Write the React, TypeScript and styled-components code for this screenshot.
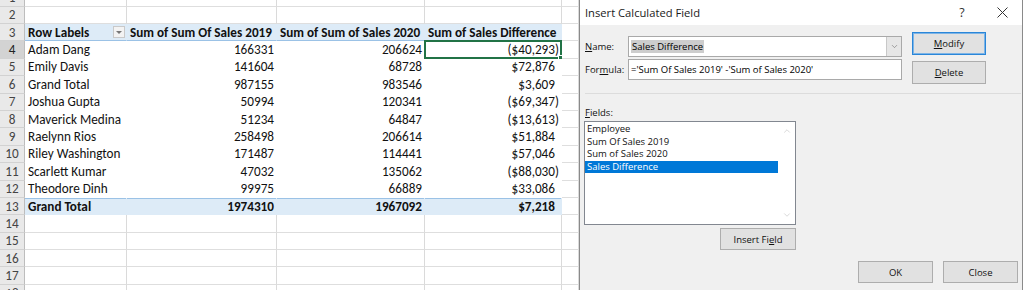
import React from 'react';
import styled, { createGlobalStyle } from 'styled-components';
import { ChevronDown, ChevronUp } from 'lucide-react';

const GlobalStyle = createGlobalStyle`
  html, body { margin: 0; padding: 0; background: #fff; overflow: hidden; }
  * { box-sizing: border-box; }
`;

const Page = styled.div`
  display: flex;
  width: 1024px;
  height: 290px;
  overflow: hidden;
  background: #fff;
`;

/* ---------- spreadsheet ---------- */

const Sheet = styled.div`
  display: grid;
  grid-template-columns: 25px 102px 150px 148px 137px 17px;
  grid-auto-rows: 17.4px;
  width: 579px;
  flex: none;
  margin-top: -10.8px;
  align-self: flex-start;
  font-family: Carlito, Calibri, Lato, sans-serif;
  font-size: 13.2px;
  color: #111;
`;

const RowHead = styled.div<{ $active?: boolean }>`
  display: flex;
  align-items: center;
  justify-content: center;
  background: ${(p) => (p.$active ? '#d3d3d3' : '#e9e9e9')};
  color: ${(p) => (p.$active ? '#222' : '#444')};
  border-right: 1px solid #bdbdbd;
  border-bottom: 1px solid #d2d2d2;
`;

type Band = 'grid' | 'plain' | 'head' | 'total';

const Cell = styled.div<{ $band: Band; $right?: boolean; $bold?: boolean; $padR?: number }>`
  position: relative;
  display: flex;
  align-items: center;
  justify-content: ${(p) => (p.$right ? 'flex-end' : 'flex-start')};
  padding: 0 ${(p) => p.$padR ?? 2}px 0 3px;
  white-space: nowrap;
  font-weight: ${(p) => (p.$bold ? 700 : 400)};
  background: ${(p) => (p.$band === 'head' || p.$band === 'total' ? '#ddebf7' : '#fff')};
  border-right: 1px solid ${(p) => (p.$band === 'grid' ? '#dadada' : 'transparent')};
  border-bottom: 1px solid
    ${(p) => (p.$band === 'grid' ? '#dedede' : p.$band === 'head' ? '#9bc2e6' : 'transparent')};
  box-shadow: ${(p) => (p.$band === 'total' ? 'inset 0 1px 0 #9bc2e6' : 'none')};
`;

const FilterButton = styled.span`
  margin-left: auto;
  width: 12px;
  height: 12px;
  display: flex;
  align-items: center;
  justify-content: center;
  background: #f3f3f3;
  border: 1px solid #c9c9c9;
  &::after {
    content: '';
    border-left: 3px solid transparent;
    border-right: 3px solid transparent;
    border-top: 3px solid #777;
  }
`;

const Selection = styled.span`
  position: absolute;
  inset: -1px -1px -1px -1px;
  border: 2px solid #217346;
  pointer-events: none;
`;

const FillHandle = styled.span`
  position: absolute;
  right: -4px;
  bottom: -4px;
  width: 6px;
  height: 6px;
  background: #217346;
  border: 1px solid #fff;
`;

/* ---------- dialog ---------- */

const Dialog = styled.div`
  width: 444px;
  flex: none;
  display: flex;
  flex-direction: column;
  background: #f0f0f0;
  border-left: 1px solid #8a8a8a;
  border-right: 1px solid #8a8a8a;
  font-family: 'Segoe UI', 'Open Sans', sans-serif;
  font-size: 9.5px;
  color: #000;
`;

const TitleBar = styled.div`
  height: 25px;
  display: flex;
  align-items: center;
  background: #fff;
  padding-left: 5px;
`;

const Title = styled.span`
  flex: 1;
  font-size: 11.2px;
  color: #1a1a1a;
`;

const TitleButton = styled.span`
  width: 40px;
  height: 25px;
  display: flex;
  align-items: center;
  justify-content: center;
  font-size: 12.5px;
  color: #333;
`;

const Body = styled.div`
  flex: 1;
  display: flex;
  flex-direction: column;
  padding: 7px 0 0 4px;
`;

const TopSection = styled.div`
  display: flex;
  align-items: flex-start;
`;

const FormGrid = styled.div`
  display: grid;
  grid-template-columns: 44px 274px;
  grid-auto-rows: 21px;
  row-gap: 2px;
  margin-top: 4px;
`;

const Label = styled.label`
  display: flex;
  align-items: center;
  padding-left: 1px;
  color: #111;
`;

const Field = styled.div`
  display: flex;
  align-items: center;
  background: #fff;
  border: 1px solid #a9a9a9;
  padding-left: 2px;
  white-space: nowrap;
`;

const Highlight = styled.span`
  background: #cdcdcd;
  padding: 0 1px;
  line-height: 12px;
`;

const ComboText = styled.span`
  flex: 1;
`;

const DropButton = styled.span`
  align-self: stretch;
  width: 15px;
  display: flex;
  align-items: center;
  justify-content: center;
  background: #e6e6e6;
  border-left: 1px solid #c8c8c8;
  color: #666;
`;

const ButtonColumn = styled.div`
  display: flex;
  flex-direction: column;
  gap: 6px;
  margin-left: 10px;
`;

const Button = styled.button<{ $primary?: boolean; $w?: number }>`
  width: ${(p) => p.$w ?? 75}px;
  height: ${(p) => (p.$primary !== undefined ? 23 : 22)}px;
  padding: 0;
  font: inherit;
  color: #111;
  background: #e1e1e1;
  border: 1px solid ${(p) => (p.$primary ? '#2a86d8' : '#adadad')};
  box-shadow: ${(p) => (p.$primary ? 'inset 0 0 0 1px #7db4e6' : 'none')};
`;

const Mn = styled.span`
  text-decoration: underline;
`;

const Separator = styled.div`
  height: 1px;
  background: #dcdcdc;
  margin: 9px 1px 0 1px;
`;

const FieldsLabel = styled(Label)`
  height: 13px;
  margin-top: 12px;
`;

const ListBox = styled.div`
  width: 212px;
  height: 104px;
  margin-top: 2px;
  display: flex;
  background: #fff;
  border: 1px solid #828790;
`;

const ListItems = styled.div`
  flex: 1;
  padding-top: 1px;
`;

const ListItem = styled.div<{ $selected?: boolean }>`
  height: 12.6px;
  line-height: 12.6px;
  padding-left: 2px;
  background: ${(p) => (p.$selected ? '#0078d7' : 'transparent')};
  color: ${(p) => (p.$selected ? '#fff' : '#111')};
`;

const ScrollBar = styled.div`
  width: 17px;
  display: flex;
  flex-direction: column;
  justify-content: space-between;
  align-items: center;
  padding: 4px 0 4px;
  color: #c2c2c2;
`;

const InsertRow = styled.div`
  width: 212px;
  display: flex;
  justify-content: flex-end;
  margin-top: 3px;
`;

const Footer = styled.div`
  display: flex;
  justify-content: flex-end;
  gap: 10px;
  margin-top: 11px;
  padding-right: 4px;
`;

/* ---------- data ---------- */

type RowData = {
  n: number;
  kind: 'blank' | 'head' | 'data' | 'total';
  label?: string;
  b?: string;
  c?: string;
  d?: string;
};

const rows: RowData[] = [
  { n: 1, kind: 'blank' },
  { n: 2, kind: 'blank' },
  { n: 3, kind: 'head' },
  { n: 4, kind: 'data', label: 'Adam Dang', b: '166331', c: '206624', d: '($40,293)' },
  { n: 5, kind: 'data', label: 'Emily Davis', b: '141604', c: '68728', d: '$72,876' },
  { n: 6, kind: 'data', label: 'Grand Total', b: '987155', c: '983546', d: '$3,609' },
  { n: 7, kind: 'data', label: 'Joshua Gupta', b: '50994', c: '120341', d: '($69,347)' },
  { n: 8, kind: 'data', label: 'Maverick Medina', b: '51234', c: '64847', d: '($13,613)' },
  { n: 9, kind: 'data', label: 'Raelynn Rios', b: '258498', c: '206614', d: '$51,884' },
  { n: 10, kind: 'data', label: 'Riley Washington', b: '171487', c: '114441', d: '$57,046' },
  { n: 11, kind: 'data', label: 'Scarlett Kumar', b: '47032', c: '135062', d: '($88,030)' },
  { n: 12, kind: 'data', label: 'Theodore Dinh', b: '99975', c: '66889', d: '$33,086' },
  { n: 13, kind: 'total', label: 'Grand Total', b: '1974310', c: '1967092', d: '$7,218' },
  { n: 14, kind: 'blank' },
  { n: 15, kind: 'blank' },
  { n: 16, kind: 'blank' },
  { n: 17, kind: 'blank' },
  { n: 18, kind: 'blank' },
];

const fields = ['Employee', 'Sum Of Sales 2019', 'Sum of Sales 2020', 'Sales Difference'];

const SheetRow: React.FC<{ row: RowData }> = ({ row }) => {
  if (row.kind === 'blank') {
    return (
      <>
        <RowHead>{row.n}</RowHead>
        <Cell $band="grid" />
        <Cell $band="grid" />
        <Cell $band="grid" />
        <Cell $band="grid" />
        <Cell $band="grid" />
      </>
    );
  }
  if (row.kind === 'head') {
    return (
      <>
        <RowHead>{row.n}</RowHead>
        <Cell $band="head" $bold $padR={1}>
          Row Labels
          <FilterButton />
        </Cell>
        <Cell $band="head" $bold>Sum of Sum Of Sales 2019</Cell>
        <Cell $band="head" $bold>Sum of Sum of Sales 2020</Cell>
        <Cell $band="head" $bold>Sum of Sales Difference</Cell>
        <Cell $band="grid" />
      </>
    );
  }
  const band: Band = row.kind === 'total' ? 'total' : 'plain';
  const bold = row.kind === 'total';
  const neg = row.d?.startsWith('(');
  const active = row.n === 4;
  return (
    <>
      <RowHead $active={active}>{row.n}</RowHead>
      <Cell $band={band} $bold={bold}>{row.label}</Cell>
      <Cell $band={band} $bold={bold} $right>{row.b}</Cell>
      <Cell $band={band} $bold={bold} $right>{row.c}</Cell>
      <Cell $band={band} $bold={bold} $right $padR={neg ? 2 : 6}>
        {row.d}
        {active && (
          <Selection>
            <FillHandle />
          </Selection>
        )}
      </Cell>
      <Cell $band="grid" />
    </>
  );
};

const CloseGlyph: React.FC = () => (
  <svg width="11" height="11" viewBox="0 0 11 11">
    <path d="M0.5 0.5 L10.5 10.5 M10.5 0.5 L0.5 10.5" stroke="#333" strokeWidth="1" fill="none" />
  </svg>
);

const App: React.FC = () => {
  return (
    <>
      <GlobalStyle />
      <Page>
        <Sheet>
          {rows.map((r) => (
            <SheetRow key={r.n} row={r} />
          ))}
        </Sheet>
        <Dialog>
          <TitleBar>
            <Title>Insert Calculated Field</Title>
            <TitleButton>?</TitleButton>
            <TitleButton>
              <CloseGlyph />
            </TitleButton>
          </TitleBar>
          <Body>
            <TopSection>
              <FormGrid>
                <Label>
                  <Mn>N</Mn>ame:
                </Label>
                <Field>
                  <ComboText>
                    <Highlight>Sales Difference</Highlight>
                  </ComboText>
                  <DropButton>
                    <ChevronDown size={9} strokeWidth={1.5} />
                  </DropButton>
                </Field>
                <Label>
                  For<Mn>m</Mn>ula:
                </Label>
                <Field>='Sum Of Sales 2019' -'Sum of Sales 2020'</Field>
              </FormGrid>
              <ButtonColumn>
                <Button $primary $w={74}>
                  <Mn>M</Mn>odify
                </Button>
                <Button $primary={false} $w={74}>
                  <Mn>D</Mn>elete
                </Button>
              </ButtonColumn>
            </TopSection>
            <Separator />
            <FieldsLabel>
              <Mn>F</Mn>ields:
            </FieldsLabel>
            <ListBox>
              <ListItems>
                {fields.map((f, i) => (
                  <ListItem key={f} $selected={i === 3}>
                    {f}
                  </ListItem>
                ))}
              </ListItems>
              <ScrollBar>
                <ChevronUp size={10} strokeWidth={1.5} />
                <ChevronDown size={10} strokeWidth={1.5} />
              </ScrollBar>
            </ListBox>
            <InsertRow>
              <Button $w={76}>
                Insert Fi<Mn>e</Mn>ld
              </Button>
            </InsertRow>
            <Footer>
              <Button>OK</Button>
              <Button>Close</Button>
            </Footer>
          </Body>
        </Dialog>
      </Page>
    </>
  );
};

export default App;
